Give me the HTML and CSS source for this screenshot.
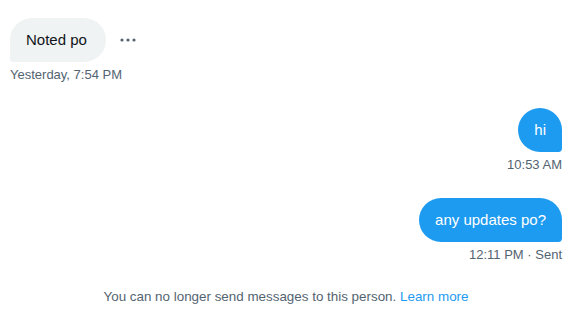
FILE: index.html
```html
<!DOCTYPE html>
<html>
<head>
<meta charset="utf-8">
<link rel="stylesheet" href="styles.css">
</head>
<body>
<div class="chat">
  <div class="msg msg-in">
    <div class="row">
      <div class="bubble bubble-in">Noted po</div>
      <div class="more" aria-label="More">
        <svg width="16" height="6" viewBox="0 0 16 6"><circle cx="2" cy="3" r="1.6" fill="#536471"/><circle cx="8" cy="3" r="1.6" fill="#536471"/><circle cx="14" cy="3" r="1.6" fill="#536471"/></svg>
      </div>
    </div>
    <div class="time">Yesterday, 7:54 PM</div>
  </div>

  <div class="msg msg-out first-out">
    <div class="bubble bubble-out">hi</div>
    <div class="time">10:53 AM</div>
  </div>

  <div class="msg msg-out second-out">
    <div class="bubble bubble-out">any updates po?</div>
    <div class="time">12:11 PM · Sent</div>
  </div>

  <div class="notice">You can no longer send messages to this person. <a class="link" href="#">Learn more</a></div>
</div>
</body>
</html>
```

FILE: styles.css
```css
html, body {
  margin: 0;
  padding: 0;
  background: #ffffff;
}
body {
  font-family: "Liberation Sans", Arial, sans-serif;
  color: #0f1419;
}
.chat {
  width: 572px;
  height: 333px;
  box-sizing: border-box;
  padding: 18px 10px 0 10px;
  display: flex;
  flex-direction: column;
}
.msg {
  display: flex;
  flex-direction: column;
}
.msg-in {
  align-items: flex-start;
}
.msg-out {
  align-items: flex-end;
}
.row {
  display: flex;
  align-items: center;
}
.bubble {
  font-size: 15px;
  line-height: 20px;
  padding: 12px 16px;
  border-radius: 24px;
}
.bubble-in {
  background: #eff3f4;
  color: #0f1419;
  border-bottom-left-radius: 4px;
  padding-right: 19px;
}
.bubble-out {
  background: #1d9bf0;
  color: #ffffff;
  border-bottom-right-radius: 4px;
}
.more {
  margin-left: 14px;
  display: flex;
  align-items: center;
}
.more svg {
  display: block;
}
.time {
  margin-top: 5px;
  font-size: 13px;
  line-height: 16px;
  color: #536471;
}
.first-out {
  margin-top: 25px;
}
.second-out {
  margin-top: 25px;
}
.notice {
  margin-top: 25px;
  text-align: center;
  font-size: 13.4px;
  line-height: 18px;
  color: #536471;
}
.link {
  color: #1d9bf0;
  text-decoration: none;
}
```
